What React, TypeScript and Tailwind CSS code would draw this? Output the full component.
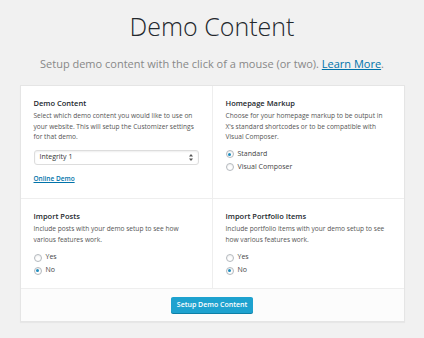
function Radio({ label, checked }: { label: string; checked?: boolean }) {
  return (
    <label className="flex h-[13px] items-center gap-[4px] text-[7px] text-[#444]">
      <span className="flex h-[8px] w-[8px] items-center justify-center rounded-full border border-[#b4b9be] bg-white shadow-[inset_0_1px_2px_rgba(0,0,0,0.07)]">
        {checked && <span className="h-[3px] w-[3px] rounded-full bg-[#1e8cbe]" />}
      </span>
      {label}
    </label>
  );
}

function Cell({
  title,
  text,
  children,
  className = '',
}: {
  title: string;
  text: string;
  children: React.ReactNode;
  className?: string;
}) {
  return (
    <div className={`px-[13px] pt-[12px] ${className}`}>
      <h3 className="text-[7.5px] font-semibold leading-[10px] text-[#23282d]">{title}</h3>
      <p className="mt-[3px] text-[6.6px] leading-[10.5px] text-[#555]">{text}</p>
      {children}
    </div>
  );
}

export default function App() {
  return (
    <div
      className="h-[338px] w-[424px] overflow-hidden bg-[#f1f1f1] pt-[11px]"
      style={{ fontFamily: '"Open Sans", sans-serif' }}
    >
      <h1 className="text-center text-[25px] font-light leading-[30px] text-[#23282d]">Demo Content</h1>
      <p className="mt-[15px] text-center text-[11px] leading-[16px] text-[#888]">
        Setup demo content with the click of a mouse (or two).{' '}
        <a className="text-[#0073aa] underline">Learn More</a>.
      </p>

      <div className="mx-auto mt-[13px] w-[385px] border border-[#e5e5e5] bg-white shadow-[0_1px_1px_rgba(0,0,0,0.04)]">
        <div className="grid grid-cols-[192px_1fr]">
          <Cell
            title="Demo Content"
            text="Select which demo content you would like to use on your website. This will setup the Customizer settings for that demo."
            className="h-[113px] border-r border-b border-[#eee]"
          >
            <div className="mt-[7px] flex h-[15px] items-center justify-between rounded-[3px] border border-[#ddd] bg-white px-[5px] text-[7px] text-[#333] shadow-[inset_0_1px_2px_rgba(0,0,0,0.07)]">
              <span>Integrity 1</span>
              <svg width="4" height="7" viewBox="0 0 4 7" fill="#555">
                <path d="M2 0 L4 2.6 H0 Z" />
                <path d="M2 7 L4 4.4 H0 Z" />
              </svg>
            </div>
            <a className="mt-[9px] block text-[6.5px] font-semibold leading-[10px] text-[#0073aa] underline">
              Online Demo
            </a>
          </Cell>
          <Cell
            title="Homepage Markup"
            text="Choose for your homepage markup to be output in X's standard shortcodes or to be compatible with Visual Composer."
            className="h-[113px] border-b border-[#eee]"
          >
            <div className="mt-[5px] flex flex-col">
              <Radio label="Standard" checked />
              <Radio label="Visual Composer" />
            </div>
          </Cell>
          <Cell
            title="Import Posts"
            text="Include posts with your demo setup to see how various features work."
            className="h-[90px] border-r border-b border-[#eee]"
          >
            <div className="mt-[6px] flex flex-col">
              <Radio label="Yes" />
              <Radio label="No" checked />
            </div>
          </Cell>
          <Cell
            title="Import Portfolio Items"
            text="Include portfolio items with your demo setup to see how various features work."
            className="h-[90px] border-b border-[#eee]"
          >
            <div className="mt-[6px] flex flex-col">
              <Radio label="Yes" />
              <Radio label="No" checked />
            </div>
          </Cell>
        </div>
        <div className="flex h-[32px] items-center justify-center bg-[#fcfcfc]">
          <button className="h-[16px] rounded-[2px] bg-[#1ea2cf] px-[6px] text-[7px] font-semibold text-white shadow-[0_1px_0_#0e7fa6]">
            Setup Demo Content
          </button>
        </div>
      </div>
    </div>
  );
}
